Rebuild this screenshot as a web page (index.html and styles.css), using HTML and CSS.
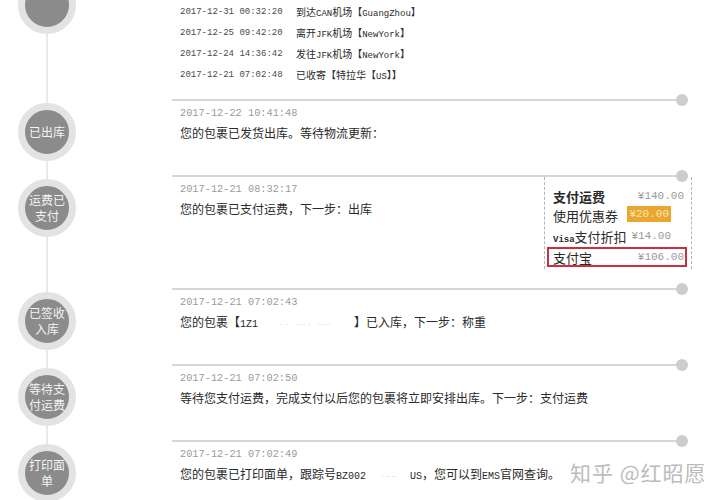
FILE: index.html
```html
<!DOCTYPE html>
<html lang="zh-CN">
<head>
	<meta charset="utf-8" />
	<title>包裹物流</title>
	<link rel="stylesheet" href="styles.css">
</head>
<body>
	<div class="page">
		<div class="timeline">

			<div class="step first">
				<div class="node"></div>
				<div class="card card-top">
					<ul class="track">
						<li><span class="when">2017-12-31 00:32:20</span><span>到达<span class="en">CAN</span>机场【<span class="en">GuangZhou</span>】</span></li>
						<li><span class="when">2017-12-25 09:42:20</span><span>离开<span class="en">JFK</span>机场【<span class="en">NewYork</span>】</span></li>
						<li><span class="when">2017-12-24 14:36:42</span><span>发往<span class="en">JFK</span>机场【<span class="en">NewYork</span>】</span></li>
						<li><span class="when">2017-12-21 07:02:48</span><span>已收寄【特拉华【<span class="en">US</span>】】</span></li>
					</ul>
				</div>
			</div>

			<div class="step">
				<div class="node"><span>已出库</span></div>
				<div class="card">
					<div class="time">2017-12-22 10:41:48</div>
					<div class="msg">您的包裹已发货出库。等待物流更新：</div>
				</div>
			</div>

			<div class="step">
				<div class="node"><span>运费已<br>支付</span></div>
				<div class="card card-split">
					<div class="card-main">
						<div class="time">2017-12-21 08:32:17</div>
						<div class="msg">您的包裹已支付运费，下一步：出库</div>
					</div>
					<div class="pay">
						<div class="pay-row pay-head"><b>支付运费</b><span class="price">¥140.00</span></div>
						<div class="pay-row pay-coupon"><span>使用优惠券</span><span class="price coupon">¥20.00</span></div>
						<div class="pay-row pay-visa"><span><span class="en">Visa</span>支付折扣</span><span class="price">¥14.00</span></div>
						<div class="pay-row pay-total"><span>支付宝</span><span class="price">¥106.00</span></div>
					</div>
				</div>
			</div>

			<div class="step">
				<div class="node"><span>已签收<br>入库</span></div>
				<div class="card">
					<div class="time">2017-12-21 07:02:43</div>
					<div class="msg">您的包裹【<span class="en">1Z1</span><span class="mask mask-wide">·-  ·–·  ––·</span>】已入库，下一步：称重</div>
				</div>
			</div>

			<div class="step">
				<div class="node"><span>等待支<br>付运费</span></div>
				<div class="card">
					<div class="time">2017-12-21 07:02:50</div>
					<div class="msg">等待您支付运费，完成支付以后您的包裹将立即安排出库。下一步：支付运费</div>
				</div>
			</div>

			<div class="step">
				<div class="node"><span>打印面<br>单</span></div>
				<div class="card">
					<div class="time">2017-12-21 07:02:49</div>
					<div class="msg">您的包裹已打印面单，跟踪号<span class="en">BZ002</span><span class="mask mask-narrow">·––</span><span class="en">US</span>，您可以到<span class="en">EMS</span>官网查询。</div>
				</div>
			</div>

		</div>
		<div class="watermark">知乎 @红昭愿</div>
	</div>
</body>
</html>
```

FILE: styles.css
```css
body {
	margin: 0;
	background-color: #ffffff;
	font-family: "Noto Sans CJK SC", sans-serif;
	color: #2a2a2a;
}

.page {
	position: relative;
	height: 500px;
	overflow: hidden;
}

.en {
	font-family: "Liberation Mono", "Noto Sans CJK SC", monospace;
}


/* Timeline
 * ======== */

.timeline {
	background: linear-gradient(to right, transparent 46px, #e9e9e9 46px, #e9e9e9 48px, transparent 48px);
}

.step {
	display: flex;
	align-items: flex-start;
}

.node {
	flex: none;
	width: 44px;
	height: 44px;
	margin: 4px 0 0 18px;
	border: 7px solid #e3e3e3;
	border-radius: 50%;
	background-color: #8b8b8b;
	color: #f4f4f4;
	font-size: 12px;
	line-height: 16px;
	display: flex;
	align-items: center;
	justify-content: center;
	text-align: center;
	white-space: nowrap;
}

.first .node {
	margin-top: -24px;
}

.card {
	position: relative;
	flex: none;
	width: 510px;
	min-height: 76px;
	margin-left: 96px;
	box-sizing: border-box;
	border-top: 2px solid #d6d6d6;
}

.card::after {
	content: "";
	position: absolute;
	right: -6px;
	top: -7px;
	width: 12px;
	height: 12px;
	border-radius: 50%;
	background-color: #cdcdcd;
}

.card-top {
	border-top: 0 none;
	min-height: 99px;
	padding-top: 1px;
}

.card-top::after {
	display: none;
}

.card-split {
	display: flex;
	align-items: flex-start;
}

.card-main {
	flex: 1;
}

.time {
	padding: 5px 0 0 8px;
	font-family: "Liberation Mono", monospace;
	font-size: 10.3px;
	line-height: 14px;
	color: #9a9a9a;
}

.msg {
	margin-top: 4px;
	padding-left: 8px;
	font-size: 12px;
	line-height: 18px;
	white-space: nowrap;
}

.msg .en {
	font-size: 10px;
}

.mask {
	display: inline-block;
	font-family: "Liberation Mono", monospace;
	font-size: 9px;
	color: #e2e2e2;
	text-align: center;
}

.mask-wide {
	width: 96px;
}

.mask-narrow {
	width: 44px;
}


/* Tracking rows
 * ============= */

.track {
	list-style: none;
	margin: 0;
	padding: 0 0 0 8px;
	font-size: 10px;
	color: #2a2a2a;
}

.track li {
	display: flex;
	align-items: center;
	height: 21px;
}

.track .en {
	font-size: 9px;
}

.track .when {
	width: 116px;
	font-family: "Liberation Mono", monospace;
	font-size: 9px;
	color: #4a4a4a;
}


/* Payment box
 * =========== */

.pay {
	flex: none;
	width: 148px;
	height: 92px;
	margin: 0 -10px 19px 0;
	padding: 9px 7px 2px 8px;
	box-sizing: border-box;
	border-left: 1px dashed #b3b3b3;
	border-right: 1px dashed #b3b3b3;
}

.pay-row {
	display: flex;
	justify-content: space-between;
	align-items: center;
	font-size: 13px;
	white-space: nowrap;
}

.pay-row .en {
	font-size: 9px;
	font-weight: bold;
}

.price {
	font-family: "Liberation Mono", monospace;
	font-size: 11px;
	color: #9a9a9a;
}

.pay-head {
	height: 20px;
}

.pay-head b {
	font-weight: 700;
}

.pay-coupon {
	height: 22px;
	align-items: flex-start;
}

.coupon {
	height: 16px;
	line-height: 16px;
	padding: 0 2px;
	margin-right: 13px;
	background-color: #e9a630;
	color: #fbe7b4;
}

.pay-visa {
	height: 16px;
}

.pay-visa .price {
	margin-right: 13px;
}

.pay-total {
	height: 20px;
	margin: 3px -3px 0 -6px;
	padding: 0 1px 0 4px;
	box-sizing: border-box;
	border: 2px solid #cb2f3e;
}

.watermark {
	position: absolute;
	left: 570px;
	top: 457px;
	font-size: 21px;
	letter-spacing: 1px;
	color: #bcbcbc;
}
```
